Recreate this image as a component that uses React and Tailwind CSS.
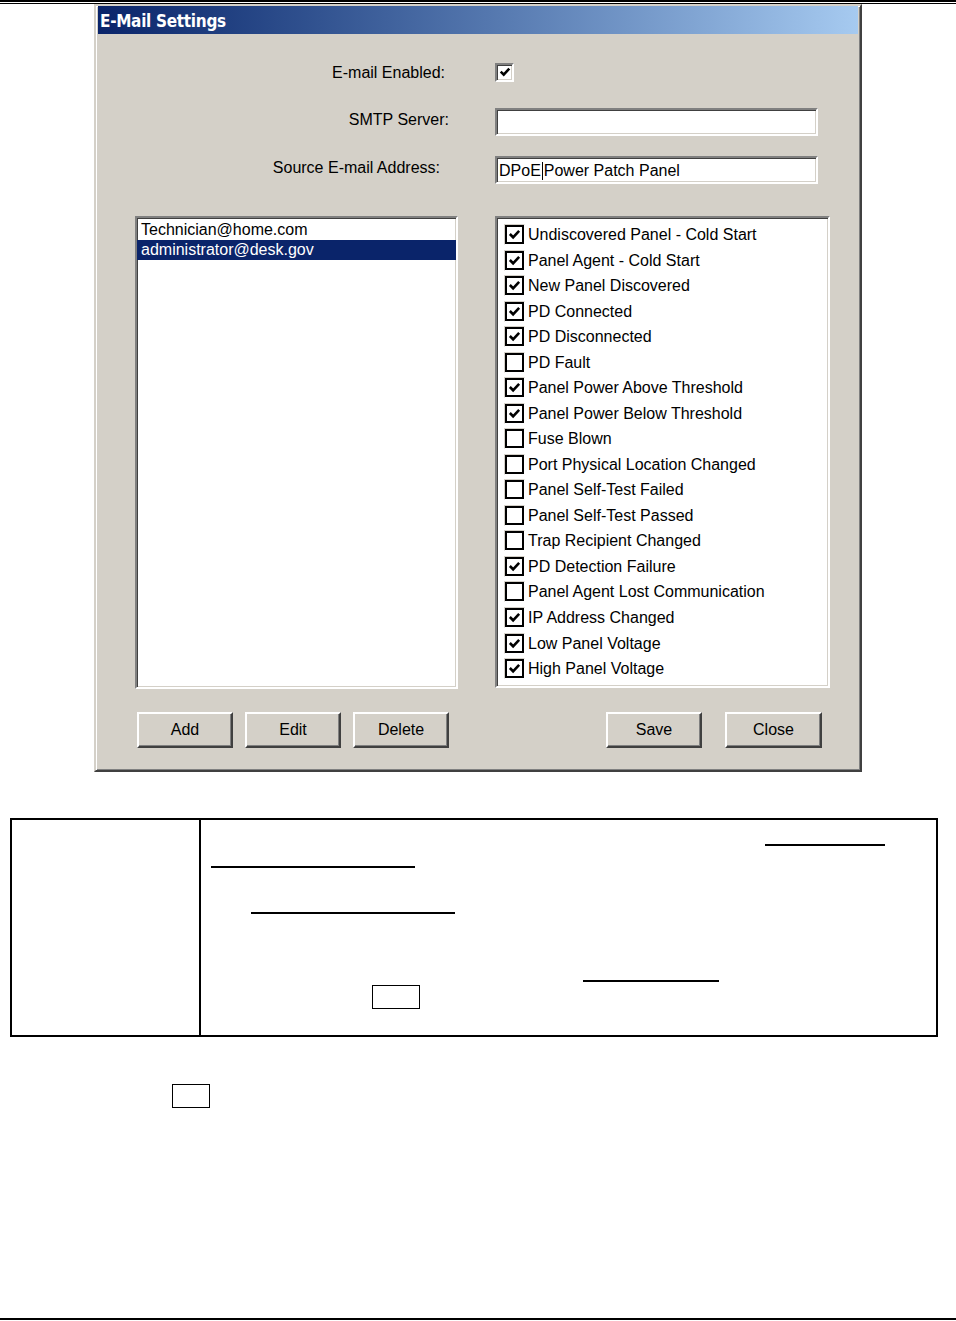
// App.jsx
const eventos = [
  ['Undiscovered Panel - Cold Start', true],
  ['Panel Agent - Cold Start', true],
  ['New Panel Discovered', true],
  ['PD Connected', true],
  ['PD Disconnected', true],
  ['PD Fault', false],
  ['Panel Power Above Threshold', true],
  ['Panel Power Below Threshold', true],
  ['Fuse Blown', false],
  ['Port Physical Location Changed', false],
  ['Panel Self-Test Failed', false],
  ['Panel Self-Test Passed', false],
  ['Trap Recipient Changed', false],
  ['PD Detection Failure', true],
  ['Panel Agent Lost Communication', false],
  ['IP Address Changed', true],
  ['Low Panel Voltage', true],
  ['High Panel Voltage', true],
]

const sunken = 'border-2 border-t-[#808080] border-l-[#808080] border-r-white border-b-white shadow-[inset_1px_1px_0_#404040,inset_-1px_-1px_0_#d4d0c8]'

const Check = ({ size = 14, grosor = 2.8 }) => (
  <svg width={size} height={size} viewBox="0 0 14 14">
    <path d="M2 6.5 L5.5 10 L12 3" fill="none" stroke="black" strokeWidth={grosor} />
  </svg>
)

const Boton = ({ children, w = 'w-[96px]' }) => (
  <button className={`${w} h-[36px] bg-[#d4d0c8] border-2 border-t-white border-l-white border-r-[#404040] border-b-[#404040] shadow-[inset_-1px_-1px_0_#808080] text-[16px] text-black`}>
    {children}
  </button>
)

export default function App() {
  return (
    <div className="w-[956px] h-[1321px] bg-white overflow-hidden" style={{ fontFamily: '"Liberation Sans", Arial, sans-serif' }}>
      <div className="h-[2px] bg-black" />
      <div className="h-[1px] mt-[1px] bg-black" />

      {/* dialogo */}
      <div className="ml-[94px] w-[768px] h-[768px] bg-[#d4d0c8] border-2 border-t-[#d4d0c8] border-l-[#d4d0c8] border-r-[#404040] border-b-[#404040] shadow-[inset_1px_1px_0_white,inset_-1px_-1px_0_#808080] px-[2px]">
        <div className="h-[28px] flex items-center pl-[2px] pt-[3px] bg-gradient-to-r from-[#0a246a] to-[#a6caf0]">
          <span className="text-white font-bold text-[17px] tracking-[-0.3px]" style={{ fontFamily: '"DejaVu Sans Condensed", "Liberation Sans", sans-serif' }}>E-Mail Settings</span>
        </div>

        <div className="mt-[24px] h-[28px] flex items-center">
          <div className="w-[352px] text-right pr-[5px] pt-[1px] text-[16px]">E-mail Enabled:</div>
          <div className={`ml-[45px] w-[19px] h-[19px] bg-white flex items-center justify-center ${sunken}`}>
            <Check size={12} grosor={3} />
          </div>
        </div>

        <div className="mt-[22px] h-[28px] flex items-center">
          <div className="w-[352px] text-right pr-[1px] pb-[5px] text-[16px]">SMTP Server:</div>
          <div className={`ml-[45px] w-[323px] h-[28px] bg-white ${sunken}`} />
        </div>

        <div className="mt-[20px] h-[28px] flex items-center">
          <div className="w-[352px] text-right pr-[10px] pb-[5px] text-[16px]">Source E-mail Address:</div>
          <div className={`ml-[45px] w-[323px] h-[28px] bg-white flex items-center pl-[2px] pt-[1px] text-[16px] ${sunken}`}>
            DPoE<span className="inline-block w-[1px] h-[18px] bg-black mx-[1px]" />Power Patch Panel
          </div>
        </div>

        <div className="mt-[32px] flex">
          <div className={`ml-[37px] w-[323px] h-[473px] bg-white pt-[2px] text-[16px] ${sunken}`}>
            <div className="h-[20px] flex items-center pl-[4px]">Technician@home.com</div>
            <div className="h-[20px] flex items-center pl-[4px] bg-[#0a246a] text-white">administrator@desk.gov</div>
          </div>
          <div className={`ml-[37px] w-[335px] h-[472px] bg-white pt-[4px] ${sunken}`}>
            {eventos.map(([nombre, marcado]) => (
              <div key={nombre} className="h-[25.53px] flex items-center pl-[7px] text-[16px]">
                <div className="w-[21px] h-[21px] border border-t-[#d4d0c8] border-l-[#d4d0c8] border-r-white border-b-white flex">
                  <div className="w-[19px] h-[19px] border-[2.5px] border-black bg-white flex items-center justify-center">
                    {marcado && <Check size={13} />}
                  </div>
                </div>
                <span className="ml-[3px] pt-[1px]">{nombre}</span>
              </div>
            ))}
          </div>
        </div>

        <div className="mt-[23px] flex">
          <div className="ml-[39px] flex gap-[12px]">
            <Boton>Add</Boton>
            <Boton>Edit</Boton>
            <Boton>Delete</Boton>
          </div>
          <div className="ml-[157px] flex gap-[23px]">
            <Boton>Save</Boton>
            <Boton w="w-[97px]">Close</Boton>
          </div>
        </div>
      </div>

      {/* tabla */}
      <div className="mt-[46px] ml-[10px] w-[928px] h-[219px] border-2 border-black flex">
        <div className="w-[189px] border-r-2 border-black" />
        <div className="flex-1">
          <div className="mt-[24px] ml-[564px] w-[120px] h-[2px] bg-black" />
          <div className="mt-[20px] ml-[10px] w-[204px] h-[2px] bg-black" />
          <div className="mt-[44px] ml-[50px] w-[204px] h-[2px] bg-black" />
          <div className="mt-[66px] ml-[382px] w-[136px] h-[2px] bg-black" />
          <div className="mt-[3px] ml-[171px] w-[48px] h-[24px] border border-black" />
        </div>
      </div>

      <div className="mt-[47px] ml-[172px] w-[38px] h-[24px] border border-black" />

      <div className="mt-[210px] h-[2px] bg-black" />
    </div>
  )
}
